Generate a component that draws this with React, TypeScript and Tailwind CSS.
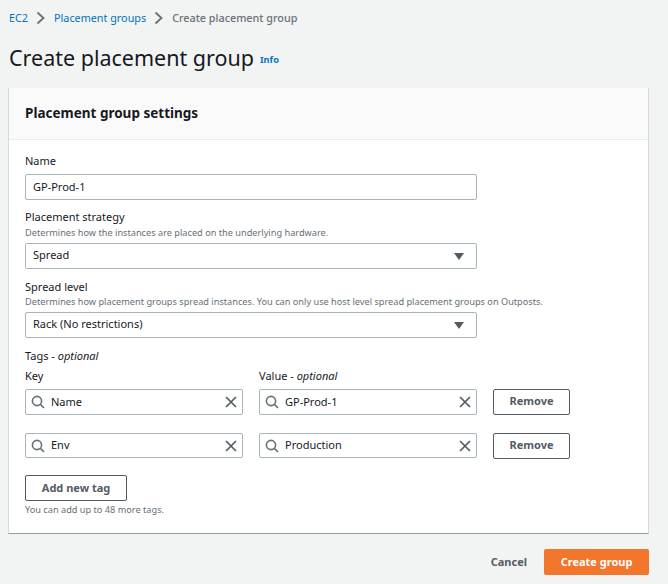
// src/App.tsx
const FONT = "font-['Noto_Sans','Open_Sans',sans-serif]";

function Chevron() {
  return (
    <svg width="10" height="14" viewBox="0 0 10 14" fill="none" stroke="#687078" strokeWidth="1.8">
      <path d="M1.5 1.5 L7.5 7 L1.5 12.5" />
    </svg>
  );
}

function SearchIcon() {
  return (
    <svg width="14" height="14" viewBox="0 0 14 14" fill="none" stroke="#687078" strokeWidth="1.6" className="shrink-0">
      <circle cx="6" cy="6" r="4.6" />
      <path d="M9.4 9.4 L13 13" />
    </svg>
  );
}

function ClearIcon() {
  return (
    <svg width="12" height="12" viewBox="0 0 12 12" fill="none" stroke="#545b64" strokeWidth="1.7" className="shrink-0">
      <path d="M1 1 L11 11 M11 1 L1 11" />
    </svg>
  );
}

function Box({ children }: { children: React.ReactNode }) {
  return (
    <div className="flex h-[26px] w-[452px] items-center justify-between rounded-[2px] border border-[#a5b5b8] bg-white pl-[7px] pr-[12px] text-[11px] text-[#16191f]">
      {children}
    </div>
  );
}

function SelectBox({ value }: { value: string }) {
  return (
    <Box>
      <span className="pb-[2px]">{value}</span>
      <span className="h-0 w-0 border-x-[5px] border-t-[7px] border-x-transparent border-t-[#545b64]" />
    </Box>
  );
}

function TagInput({ value, short }: { value: string; short?: boolean }) {
  return (
    <div className={`flex ${short ? "h-[25px]" : "h-[26px]"} w-[218px] items-center rounded-[2px] border border-[#a5b5b8] bg-white px-[5px] text-[11px] text-[#16191f]`}>
      <SearchIcon />
      <span className="ml-[6px] flex-1">{value}</span>
      <ClearIcon />
    </div>
  );
}

function TagRow({ k, v, short }: { k: string; v: string; short?: boolean }) {
  return (
    <div className="flex items-start gap-[16px]">
      <TagInput value={k} short={short} />
      <TagInput value={v} short={short} />
      <button className="h-[26px] w-[77px] rounded-[2px] border border-[#545b64] bg-white pb-[1px] text-[11px] font-bold text-[#545b64]">
        Remove
      </button>
    </div>
  );
}

export default function App() {
  return (
    <div className={`${FONT} min-h-[584px] w-[668px] bg-[#f2f3f3] px-[8px] pt-[10px]`}>
      <nav className="ml-[1px] flex h-[15px] items-center text-[10.8px] leading-[15px]">
        <a className="text-[#0073bb]">EC2</a>
        <span className="mx-[8px]"><Chevron /></span>
        <a className="text-[#0073bb]">Placement groups</a>
        <span className="mx-[8px]"><Chevron /></span>
        <span className="font-medium text-[#687078]">Create placement group</span>
      </nav>

      <div className="ml-[1px] mt-[18px] flex h-[30px] items-center">
        <h1 className="text-[21.5px] font-normal leading-[30px] text-[#16191f]">Create placement group</h1>
        <a className="ml-[6px] mt-[4px] text-[9.2px] font-bold text-[#0073bb]">Info</a>
      </div>

      <section className="mt-[15px] h-[446px] w-[641px] border-x border-b border-x-[#d5dbdb] border-b-[#8f9ea2] bg-white">
        <div className="flex h-[52px] items-center border-b border-[#eaeded] bg-[#fafafa] px-[16px]">
          <h2 className="text-[13.5px] font-bold text-[#16191f]">Placement group settings</h2>
        </div>

        <div className="flex flex-col px-[16px] pt-[12px]">
          <div className="text-[11px] leading-[17px] text-[#16191f]">Name</div>
          <div className="mt-[5px]">
            <Box>GP-Prod-1</Box>
          </div>

          <div className="mt-[8px] text-[11px] leading-[17px] text-[#16191f]">Placement strategy</div>
          <div className="mt-[1px] text-[9.2px] leading-[14px] text-[#687078]">
            Determines how the instances are placed on the underlying hardware.
          </div>
          <div className="mt-[3px]">
            <SelectBox value="Spread" />
          </div>

          <div className="mt-[9px] text-[11px] leading-[17px] text-[#16191f]">Spread level</div>
          <div className="text-[9.2px] leading-[14px] text-[#687078]">
            Determines how placement groups spread instances. You can only use host level spread placement groups on Outposts.
          </div>
          <div className="mt-[3px]">
            <SelectBox value="Rack (No restrictions)" />
          </div>

          <div className="mt-[9px] text-[11px] leading-[17px] text-[#16191f]">
            Tags - <i>optional</i>
          </div>
          <div className="mt-[3px] flex gap-[16px] text-[11px] leading-[17px] text-[#16191f]">
            <div className="w-[218px]">Key</div>
            <div>Value - <i>optional</i></div>
          </div>
          <div className="mt-[5px] flex flex-col gap-[18px]">
            <TagRow k="Name" v="GP-Prod-1" />
            <TagRow k="Env" v="Production" short />
          </div>

          <button className="mt-[16px] h-[26px] w-[102px] rounded-[2px] border border-[#545b64] bg-white text-[11px] font-bold text-[#545b64]">
            Add new tag
          </button>
          <div className="mt-[2px] text-[9.2px] leading-[14px] text-[#687078]">You can add up to 48 more tags.</div>
        </div>
      </section>

      <div className="mt-[15px] flex w-[641px] items-center justify-end">
        <button className="text-[11px] font-bold text-[#545b64]">Cancel</button>
        <button className="ml-[17px] h-[26px] w-[105px] rounded-[2px] bg-[#f2762b] text-[11px] font-bold text-white">
          Create group
        </button>
      </div>
    </div>
  );
}
